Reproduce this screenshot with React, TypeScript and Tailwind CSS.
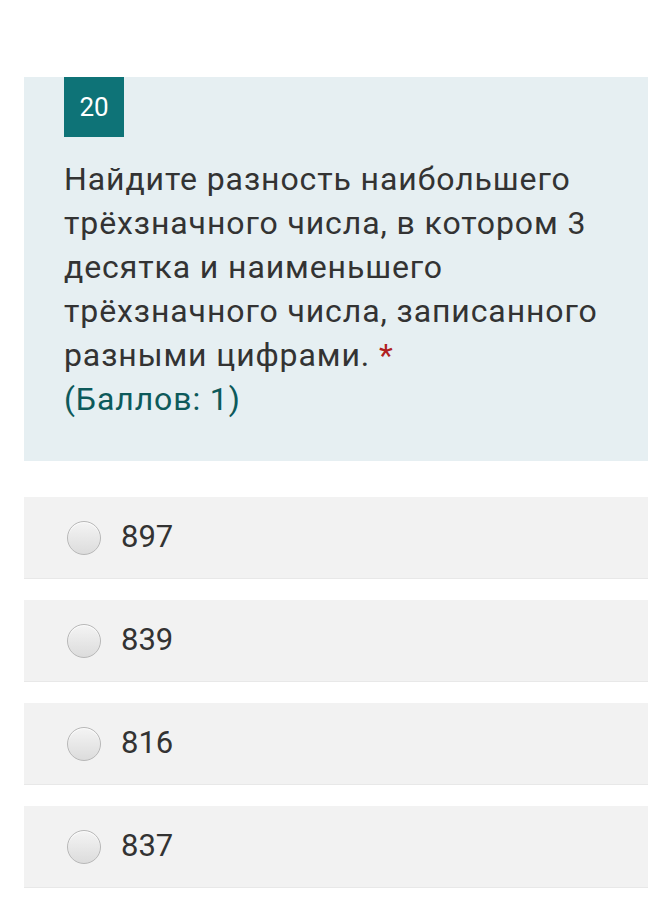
import React from "react";

const options = ["897", "839", "816", "837"];

function Radio() {
  return (
    <div className="w-[34px] h-[34px] rounded-full border border-[#b8b8b8] bg-gradient-to-b from-[#f4f4f4] to-[#dcdcdc] shadow-[inset_0_1px_1px_rgba(255,255,255,0.8)] shrink-0" />
  );
}

export default function App() {
  return (
    <div className="w-[648px] min-h-[902px] bg-white pt-[77px] pl-[24px] font-['Roboto',sans-serif]">
      <div className="bg-[#e6eff2] pl-[40px] pr-4 pb-[40px]">
        <div className="w-[60px] h-[60px] bg-[#0e7377] text-white text-[26px] flex items-center justify-center">
          20
        </div>
        <p className="mt-[20px] text-[32px] leading-[44px] tracking-[0.9px] text-[#333333]">
          Найдите разность наибольшего трёхзначного числа, в котором 3 десятка и наименьшего трёхзначного числа, записанного разными цифрами.{" "}
          <span className="text-[#b02020]">*</span>
        </p>
        <p className="text-[32px] leading-[44px] tracking-[0.9px] text-[#0d5a5b]">(Баллов: 1)</p>
      </div>
      <div className="mt-[36px] flex flex-col gap-[21px]">
        {options.map((o) => (
          <div
            key={o}
            className="h-[82px] bg-[#f2f2f2] border-b border-[#e8e8e8] flex items-center pl-[43px] gap-[20px]"
          >
            <Radio />
            <span className="text-[31px] text-[#333333]">{o}</span>
          </div>
        ))}
      </div>
    </div>
  );
}
